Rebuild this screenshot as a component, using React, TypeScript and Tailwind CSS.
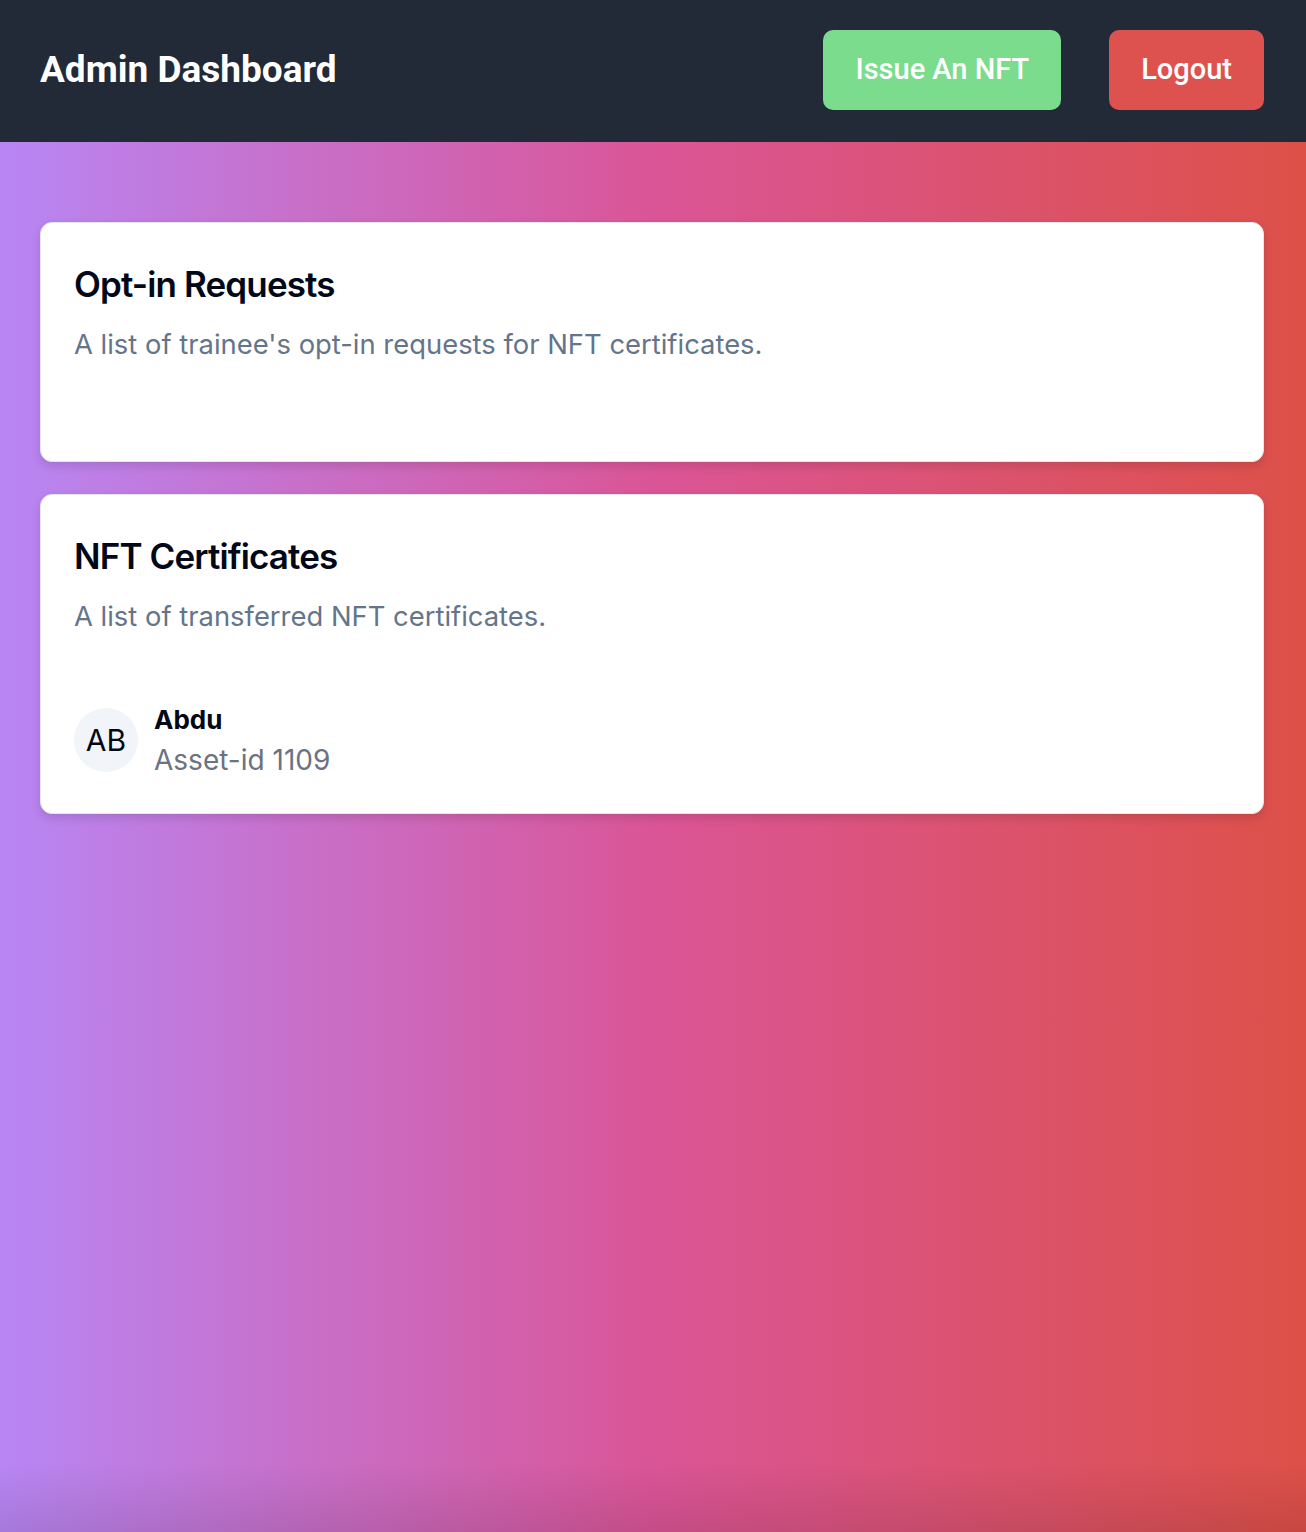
type Certificate = {
  initials: string;
  name: string;
  assetId: number;
};

const certificates: Certificate[] = [{ initials: "AB", name: "Abdu", assetId: 1109 }];

function Card({
  title,
  description,
  children,
}: {
  title: string;
  description: string;
  children?: React.ReactNode;
}) {
  return (
    <div className="rounded-[12px] border border-[#e2e8f0] bg-white px-[33px] pt-[39px] pb-[33px] shadow-[0_4px_10px_rgba(0,0,0,0.12)]">
      <h2 className="text-[35px] leading-[44px] font-semibold tracking-tight text-[#020817]">
        {title}
      </h2>
      <p className="mt-[18px] text-[27.4px] leading-[40px] text-[#64748b]">{description}</p>
      <div className="mt-[64px]">{children}</div>
    </div>
  );
}

export default function App() {
  return (
    <div className="flex min-h-screen flex-col font-['Inter',sans-serif]">
      <header className="flex h-[142px] items-center justify-between bg-[#222937] pr-[42px] pb-[2px] pl-[40px] font-['Roboto',sans-serif]">
        <h1 className="text-[37px] font-bold text-white">Admin Dashboard</h1>
        <div className="flex gap-[48px]">
          <button className="h-[80px] rounded-[10px] bg-[#7adc8c] px-[32px] text-[29px] font-medium text-white">
            Issue An NFT
          </button>
          <button className="h-[80px] rounded-[10px] bg-[#dd524e] px-[32px] text-[29px] font-medium text-white">
            Logout
          </button>
        </div>
      </header>

      <main className="flex flex-1 flex-col gap-[32px] bg-[linear-gradient(to_bottom,transparent_calc(100%-70px),rgba(0,0,0,0.1)),linear-gradient(to_right,#b886f4,#da5597,#dd5048)] pt-[80px] pr-[42px] pl-[40px]">
        <Card
          title="Opt-in Requests"
          description="A list of trainee's opt-in requests for NFT certificates."
        />
        <Card title="NFT Certificates" description="A list of transferred NFT certificates.">
          {certificates.map((cert) => (
            <div key={cert.assetId} className="flex h-[80px] items-center gap-[16px]">
              <div className="flex h-[64px] w-[64px] items-center justify-center rounded-full bg-[#f1f5f9] text-[30px] text-[#020817]">
                {cert.initials}
              </div>
              <div>
                <p className="text-[26px] leading-[40px] font-bold text-[#020817]">{cert.name}</p>
                <p className="text-[28px] leading-[40px] text-[#6b7280]">Asset-id {cert.assetId}</p>
              </div>
            </div>
          ))}
        </Card>
      </main>
    </div>
  );
}
